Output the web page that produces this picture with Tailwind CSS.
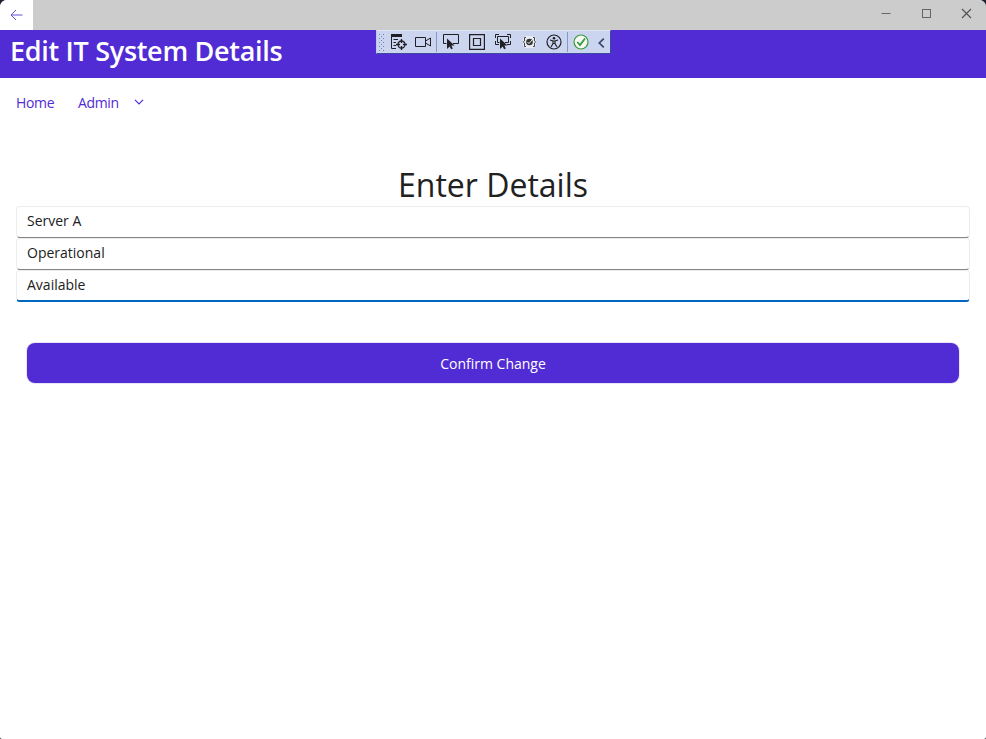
<!DOCTYPE html>
<html lang="en">
<head>
<meta charset="utf-8">
<title>Edit IT System Details</title>
<script src="https://cdn.jsdelivr.net/npm/@tailwindcss/browser@4"></script>
</head>
<body class="bg-[#1e2030] font-['Open_Sans',sans-serif] text-[#212121]">
<div class="relative flex h-[739px] w-[986px] flex-col overflow-hidden rounded-t-[7px] rounded-b-[2px] bg-white">
  <header class="flex h-[30px] shrink-0 justify-between bg-[#cccccc]">
    <button class="flex w-[33px] items-center justify-center bg-white" aria-label="Back">
      <svg width="13" height="12" viewBox="0 0 13 12" fill="none" stroke="#6d4fd6"><path d="M12.5 6H1M6 1L1 6l5 5"/></svg>
    </button>
    <div class="flex items-start pt-2 pr-[13px] text-[#666]">
      <svg class="mr-[30px]" width="10" height="11" fill="none" stroke="currentColor"><path d="M.5 5.500h9"/></svg>
      <svg class="mr-[30px]" width="10" height="11" fill="none" stroke="currentColor"><rect x="1.500" y="1.500" width="8" height="8"/></svg>
      <svg width="12" height="11" fill="none" stroke="#505050" stroke-width="1.100"><path d="M1 1l9 9M10 1l-9 9"/></svg>
    </div>
  </header>
  <div class="h-12 shrink-0 bg-[#512bd4] pl-[10px]">
    <h1 class="text-[27px] leading-[41px] font-semibold tracking-[-0.3px] whitespace-nowrap text-white">Edit IT System Details</h1>
  </div>
  <div class="absolute top-[30px] left-[376px] flex h-6 w-[235px] items-center border border-[#3b4b9b] border-l-[#bcc8ea] border-t-[#dfe5f5] bg-[#ccd5f0] text-[#1f1f24]">
    <svg class="ml-px shrink-0" width="7" height="19" fill="#6e80ad"><path d="M1 1h1v1H1zM5 1h1v1H5zM3 3h1v1H3zM1 5h1v1H1zM5 5h1v1H5zM3 7h1v1H3zM1 9h1v1H1zM5 9h1v1H5zM3 11h1v1H3zM1 13h1v1H1zM5 13h1v1H5zM3 15h1v1H3zM1 17h1v1H1zM5 17h1v1H5z"/></svg>
    <svg class="ml-[6px] shrink-0" width="16" height="16" fill="none" stroke="currentColor"><path d="M0 1.500h11" stroke-width="3"/><path d="M.5 3v11.500H5M2.500 5.500H7M2.500 8.500H5M2.500 11.500H5"/><circle cx="10.500" cy="10.500" r="3.500" stroke-width="1.300"/><path d="M10.500 5v4M10.500 12v4M5 10.500h4M12 10.500h4" stroke-width="1.300"/></svg>
    <svg class="ml-2 shrink-0" width="17" height="16" fill="none" stroke="currentColor"><path d="M.5 3.500h10v9H.5zM10.500 7l5-3v8l-5-3"/></svg>
    <i class="ml-1 h-5 w-px shrink-0 bg-[#8299c8]"></i>
    <svg class="ml-[6px] shrink-0" width="17" height="16" fill="none" stroke="currentColor"><path d="M3.500 9.500H.5v-9h15v9H10"/><path d="M4 4.500v10.500l2.700-2.600 1.400 2.900 1.700-.8-1.400-3h3.200z" fill="currentColor" stroke="none"/></svg>
    <svg class="ml-[9px] shrink-0" width="16" height="16" fill="none" stroke="currentColor" stroke-width="1.200"><path d="M.6.600h14.800v14.800H.6zM4.500 4.500h7v7h-7z"/></svg>
    <svg class="ml-[10px] shrink-0" width="17" height="16" fill="none" stroke="currentColor"><path d="M.5 4V.500H4M12 .500h3.500V4M.5 7v3.500H4M12 10.500h3.500V7M4.500 8.500h-2v-6h11v6H10"/><path d="M5 4.500v10.500l2.700-2.600 1.400 2.900 1.700-.8-1.400-3h3.200z" fill="currentColor" stroke="none"/></svg>
    <svg class="ml-[10px] shrink-0" width="15" height="16" fill="none" stroke="#444"><rect x="1" y="2" width="13" height="12" rx="4" fill="#e9ecf5" stroke="none"/><path d="M4 3.500H2.500V7L1.300 8l1.200 1v3.500H4M11 3.500h1.500V7l1.200 1-1.200 1v3.500H11"/><circle cx="7.500" cy="8" r="3.300" fill="#333" stroke="none"/><path d="M5.500 8L7 9.500l3.500-4" stroke="#eee"/></svg>
    <svg class="ml-[9px] shrink-0" width="16" height="16" fill="none" stroke="currentColor"><circle cx="8" cy="8" r="7" stroke-width="1.200"/><circle cx="8" cy="4.300" r="1.300" fill="currentColor" stroke="none"/><path d="M4 6l3 1v2.500L5 13M12 6L9 7v2.500l2 3.500M7 7h2M7 9.500h2" stroke-width="1.100"/></svg>
    <i class="ml-[5px] h-5 w-px shrink-0 bg-[#8299c8]"></i>
    <svg class="ml-[5px] shrink-0" width="16" height="16" fill="none" stroke="#329b36"><circle cx="8" cy="8" r="7" fill="#f5f8f5" stroke-width="1.200"/><path d="M4.300 8l2.700 3 5-6.500" stroke-width="1.800"/></svg>
    <svg class="ml-[9px] mt-[2px] shrink-0" width="7" height="10" fill="none" stroke="#364570" stroke-width="1.700"><path d="M5.800.700L1.300 5l4.500 4.300"/></svg>
  </div>
  <nav class="flex h-[50px] shrink-0 items-center pl-4 text-[14px] tracking-[-0.35px] text-[#512bd4]">
    <a class="-mt-[2px] w-[62px]">Home</a>
    <a class="-mt-[2px] w-[56px]">Admin</a>
    <svg class="-mt-[3px]" width="10" height="6" fill="none" stroke="currentColor" stroke-width="1.200"><path d="M1 .8l4 4 4-4"/></svg>
  </nav>
  <main class="flex flex-col px-4 pt-[35px]">
    <h2 class="h-[43px] text-center text-[32px] leading-[44px] whitespace-nowrap">Enter Details</h2>
    <div class="flex flex-col text-[14px] leading-[27px]">
      <div class="h-8 rounded-[4px] border border-[#ececec] border-b-[#858585] pl-[10px]">Server A</div>
      <div class="h-8 rounded-[4px] border border-[#ececec] border-b-[#858585] pl-[10px]">Operational</div>
      <div class="h-8 rounded-[4px] border border-b-2 border-[#ececec] border-b-[#0067c0] pl-[10px]">Available</div>
    </div>
    <button class="mx-[11px] mt-[41px] h-10 rounded-lg bg-[#512bd4] text-[14px] text-white shadow-[0_0_0_1px_#e8e4f5]">Confirm Change</button>
  </main>
</div>
</body>
</html>
